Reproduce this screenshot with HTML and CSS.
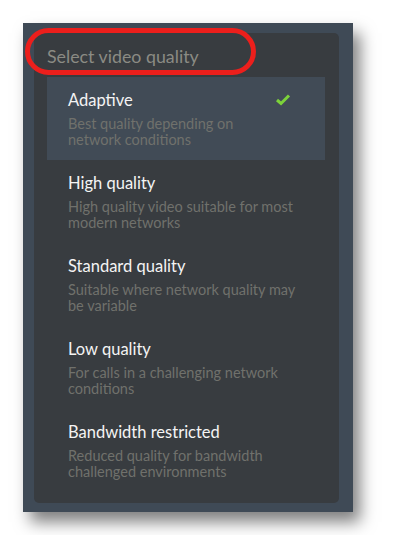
FILE: index.html
```html
<!DOCTYPE html>
<html lang="en">
<head>
    <meta charset="UTF-8">
    <meta name="viewport" content="width=device-width, initial-scale=1.0">
    <title>Select video quality</title>
    <link rel="stylesheet" href="styles.css">
</head>
<body>
    <div class="frame">
        <div class="panel">
            <div class="header">Select video quality</div>
            <ul class="options">
                <li class="option selected">
                    <div class="title">Adaptive</div>
                    <div class="desc">Best quality depending on<br>network conditions</div>
                    <svg class="check" width="16" height="13" viewBox="0 0 16 13">
                        <path d="M2 7 L6 10.5 L14 2.5" fill="none" stroke="#7cd23a" stroke-width="3"/>
                    </svg>
                </li>
                <li class="option">
                    <div class="title">High quality</div>
                    <div class="desc">High quality video suitable for most<br>modern networks</div>
                </li>
                <li class="option">
                    <div class="title">Standard quality</div>
                    <div class="desc">Suitable where network quality may<br>be variable</div>
                </li>
                <li class="option">
                    <div class="title">Low quality</div>
                    <div class="desc">For calls in a challenging network<br>conditions</div>
                </li>
                <li class="option">
                    <div class="title">Bandwidth restricted</div>
                    <div class="desc">Reduced quality for bandwidth<br>challenged environments</div>
                </li>
            </ul>
        </div>
        <div class="highlight"></div>
    </div>
</body>
</html>
```

FILE: styles.css
```css
body {
    margin: 0;
    padding: 23px;
    background: #ffffff;
    font-family: Lato, "Open Sans", sans-serif;
}
.frame {
    position: relative;
    width: 330px;
    height: 489px;
    box-sizing: border-box;
    padding: 10px 14px 9px 11px;
    background-color: #3f4a56;
    box-shadow: 7px 10px 15px rgba(0, 0, 0, 0.5);
}
.panel {
    height: 100%;
    box-sizing: border-box;
    background-color: #383c40;
    border-radius: 5px;
    padding: 0 14px 0 13px;
}
.header {
    height: 44px;
    line-height: 46px;
    font-size: 17.8px;
    color: #8b8b84;
}
.options {
    list-style: none;
    margin: 0;
    padding: 0;
}
.option {
    position: relative;
    padding: 13px 21px 12px;
}
.option.selected {
    background-color: #414b56;
}
.title {
    font-size: 16.5px;
    line-height: 20px;
    color: #f4f4f4;
}
.desc {
    margin-top: 6px;
    font-size: 14.5px;
    line-height: 16px;
    color: #70716c;
}
.check {
    position: absolute;
    top: 16px;
    right: 34px;
}
.highlight {
    position: absolute;
    left: 2px;
    top: 5px;
    width: 221px;
    height: 37px;
    border: 5px solid #ec1f1c;
    border-radius: 24px;
}
```
